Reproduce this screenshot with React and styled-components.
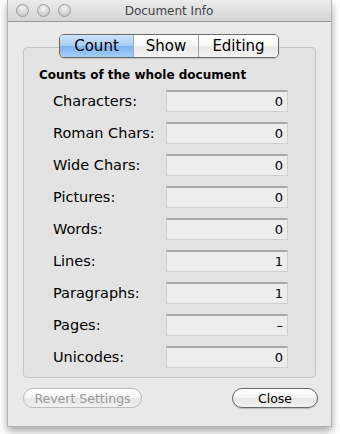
import React from "react";
import styled, { createGlobalStyle } from "styled-components";

const Global = createGlobalStyle`
  html, body { margin: 0; padding: 0; background: #ffffff; }
  body { font-family: "DejaVu Sans", "Liberation Sans", sans-serif; color: #111; }
`;

const Page = styled.div`
  padding: 0 8px 0 7px;
  width: 340px;
  height: 434px;
  box-sizing: border-box;
`;

const Window = styled.div`
  width: 325px;
  height: 427px;
  box-sizing: border-box;
  background: #e9e9e9;
  border: 1px solid #b4b4b4;
  border-top: none;
  box-shadow: 0 4px 8px rgba(0, 0, 0, 0.35);
  display: flex;
  flex-direction: column;
`;

const TitleBar = styled.div`
  height: 22px;
  box-sizing: border-box;
  background: linear-gradient(#ececec, #d4d4d4);
  border-bottom: 1px solid #999999;
  display: flex;
  align-items: center;
  padding-left: 8px;
`;

const Lights = styled.div`
  display: flex;
  gap: 8px;
`;

const Light = styled.span`
  width: 13px;
  height: 13px;
  border-radius: 50%;
  box-sizing: border-box;
  border: 1px solid #9c9c9c;
  background: radial-gradient(circle at 50% 30%, #f4f4f4 0%, #d6d6d6 55%, #c0c0c0 100%);
`;

const Title = styled.div`
  flex: 1;
  text-align: center;
  font-size: 12px;
  color: #444444;
  margin-right: 59px;
  margin-left: -5px;
`;

const Body = styled.div`
  flex: 1;
  display: flex;
  flex-direction: column;
  padding: 12px 15px 0 15px;
`;

const GroupWrap = styled.div`
  display: flex;
  flex-direction: column;
  align-items: center;
`;

const Segmented = styled.div`
  position: relative;
  z-index: 1;
  display: flex;
  height: 24px;
  box-sizing: border-box;
  border: 1px solid #6a6a6a;
  border-radius: 5px;
  overflow: hidden;
  margin-left: -1px;
  box-shadow: 0 1px 1px rgba(0, 0, 0, 0.15);
`;

const Segment = styled.div`
  width: ${(p) => p.$w}px;
  box-sizing: border-box;
  display: flex;
  align-items: center;
  justify-content: center;
  font-size: 15px;
  color: #000;
  border-left: ${(p) => (p.$first ? "none" : "1px solid #a3a3a3")};
  background: ${(p) =>
    p.$active
      ? "linear-gradient(#cfe4fa 0%, #a9cdf5 48%, #7fb4ef 52%, #a2cdf8 100%)"
      : "linear-gradient(#ffffff 0%, #f6f6f6 48%, #e9e9e9 52%, #f3f3f3 100%)"};
`;

const Group = styled.div`
  align-self: stretch;
  margin-top: -11px;
  background: #e3e3e3;
  border: 1px solid #c6c6c6;
  border-radius: 4px;
  padding: 19px 0 11px 15px;
  height: 331px;
  box-sizing: border-box;
`;

const Heading = styled.div`
  font-size: 12px;
  font-weight: bold;
  height: 16px;
  line-height: 16px;
  color: #000;
`;

const Rows = styled.div`
  display: flex;
  flex-direction: column;
  gap: 10px;
  margin-top: 7px;
`;

const Row = styled.div`
  display: grid;
  grid-template-columns: 113px 122px;
  align-items: center;
  padding-left: 14px;
`;

const Label = styled.span`
  font-size: 14.5px;
  color: #000;
`;

const Field = styled.div`
  height: 22px;
  box-sizing: border-box;
  background: #ededed;
  border: 1px solid #d0d0d0;
  border-top: 2px solid #aaaaaa;
  display: flex;
  align-items: center;
  justify-content: flex-end;
  padding-right: 4px;
  font-size: 13px;
  color: #000;
`;

const Footer = styled.div`
  display: flex;
  justify-content: space-between;
  align-items: center;
  margin: 10px -2px 0 0;
`;

const Button = styled.button`
  height: 20px;
  width: ${(p) => p.$w}px;
  border-radius: 10px;
  font-family: "DejaVu Sans", "Liberation Sans", sans-serif;
  font-size: 12.5px;
  padding: 0;
  color: ${(p) => (p.$disabled ? "#9b9b9b" : "#000")};
  border: 1px solid ${(p) => (p.$disabled ? "#bdbdbd" : "#6a6a6a")};
  background: linear-gradient(#ffffff 0%, #f4f4f4 50%, #e6e6e6 51%, #f2f2f2 100%);
  box-shadow: ${(p) => (p.$disabled ? "none" : "0 1px 1px rgba(0,0,0,0.2)")};
`;

const rows = [
  ["Characters:", "0"],
  ["Roman Chars:", "0"],
  ["Wide Chars:", "0"],
  ["Pictures:", "0"],
  ["Words:", "0"],
  ["Lines:", "1"],
  ["Paragraphs:", "1"],
  ["Pages:", "–"],
  ["Unicodes:", "0"],
];

export default function App() {
  return (
    <Page>
      <Global />
      <Window>
        <TitleBar>
          <Lights>
            <Light />
            <Light />
            <Light />
          </Lights>
          <Title>Document Info</Title>
        </TitleBar>
        <Body>
          <GroupWrap>
            <Segmented>
              <Segment $w={73} $first $active>Count</Segment>
              <Segment $w={65}>Show</Segment>
              <Segment $w={80}>Editing</Segment>
            </Segmented>
            <Group>
              <Heading>Counts of the whole document</Heading>
              <Rows>
                {rows.map(([l, v]) => (
                  <Row key={l}>
                    <Label>{l}</Label>
                    <Field>{v}</Field>
                  </Row>
                ))}
              </Rows>
            </Group>
          </GroupWrap>
          <Footer>
            <Button $w={119} $disabled>Revert Settings</Button>
            <Button $w={86}>Close</Button>
          </Footer>
        </Body>
      </Window>
    </Page>
  );
}
